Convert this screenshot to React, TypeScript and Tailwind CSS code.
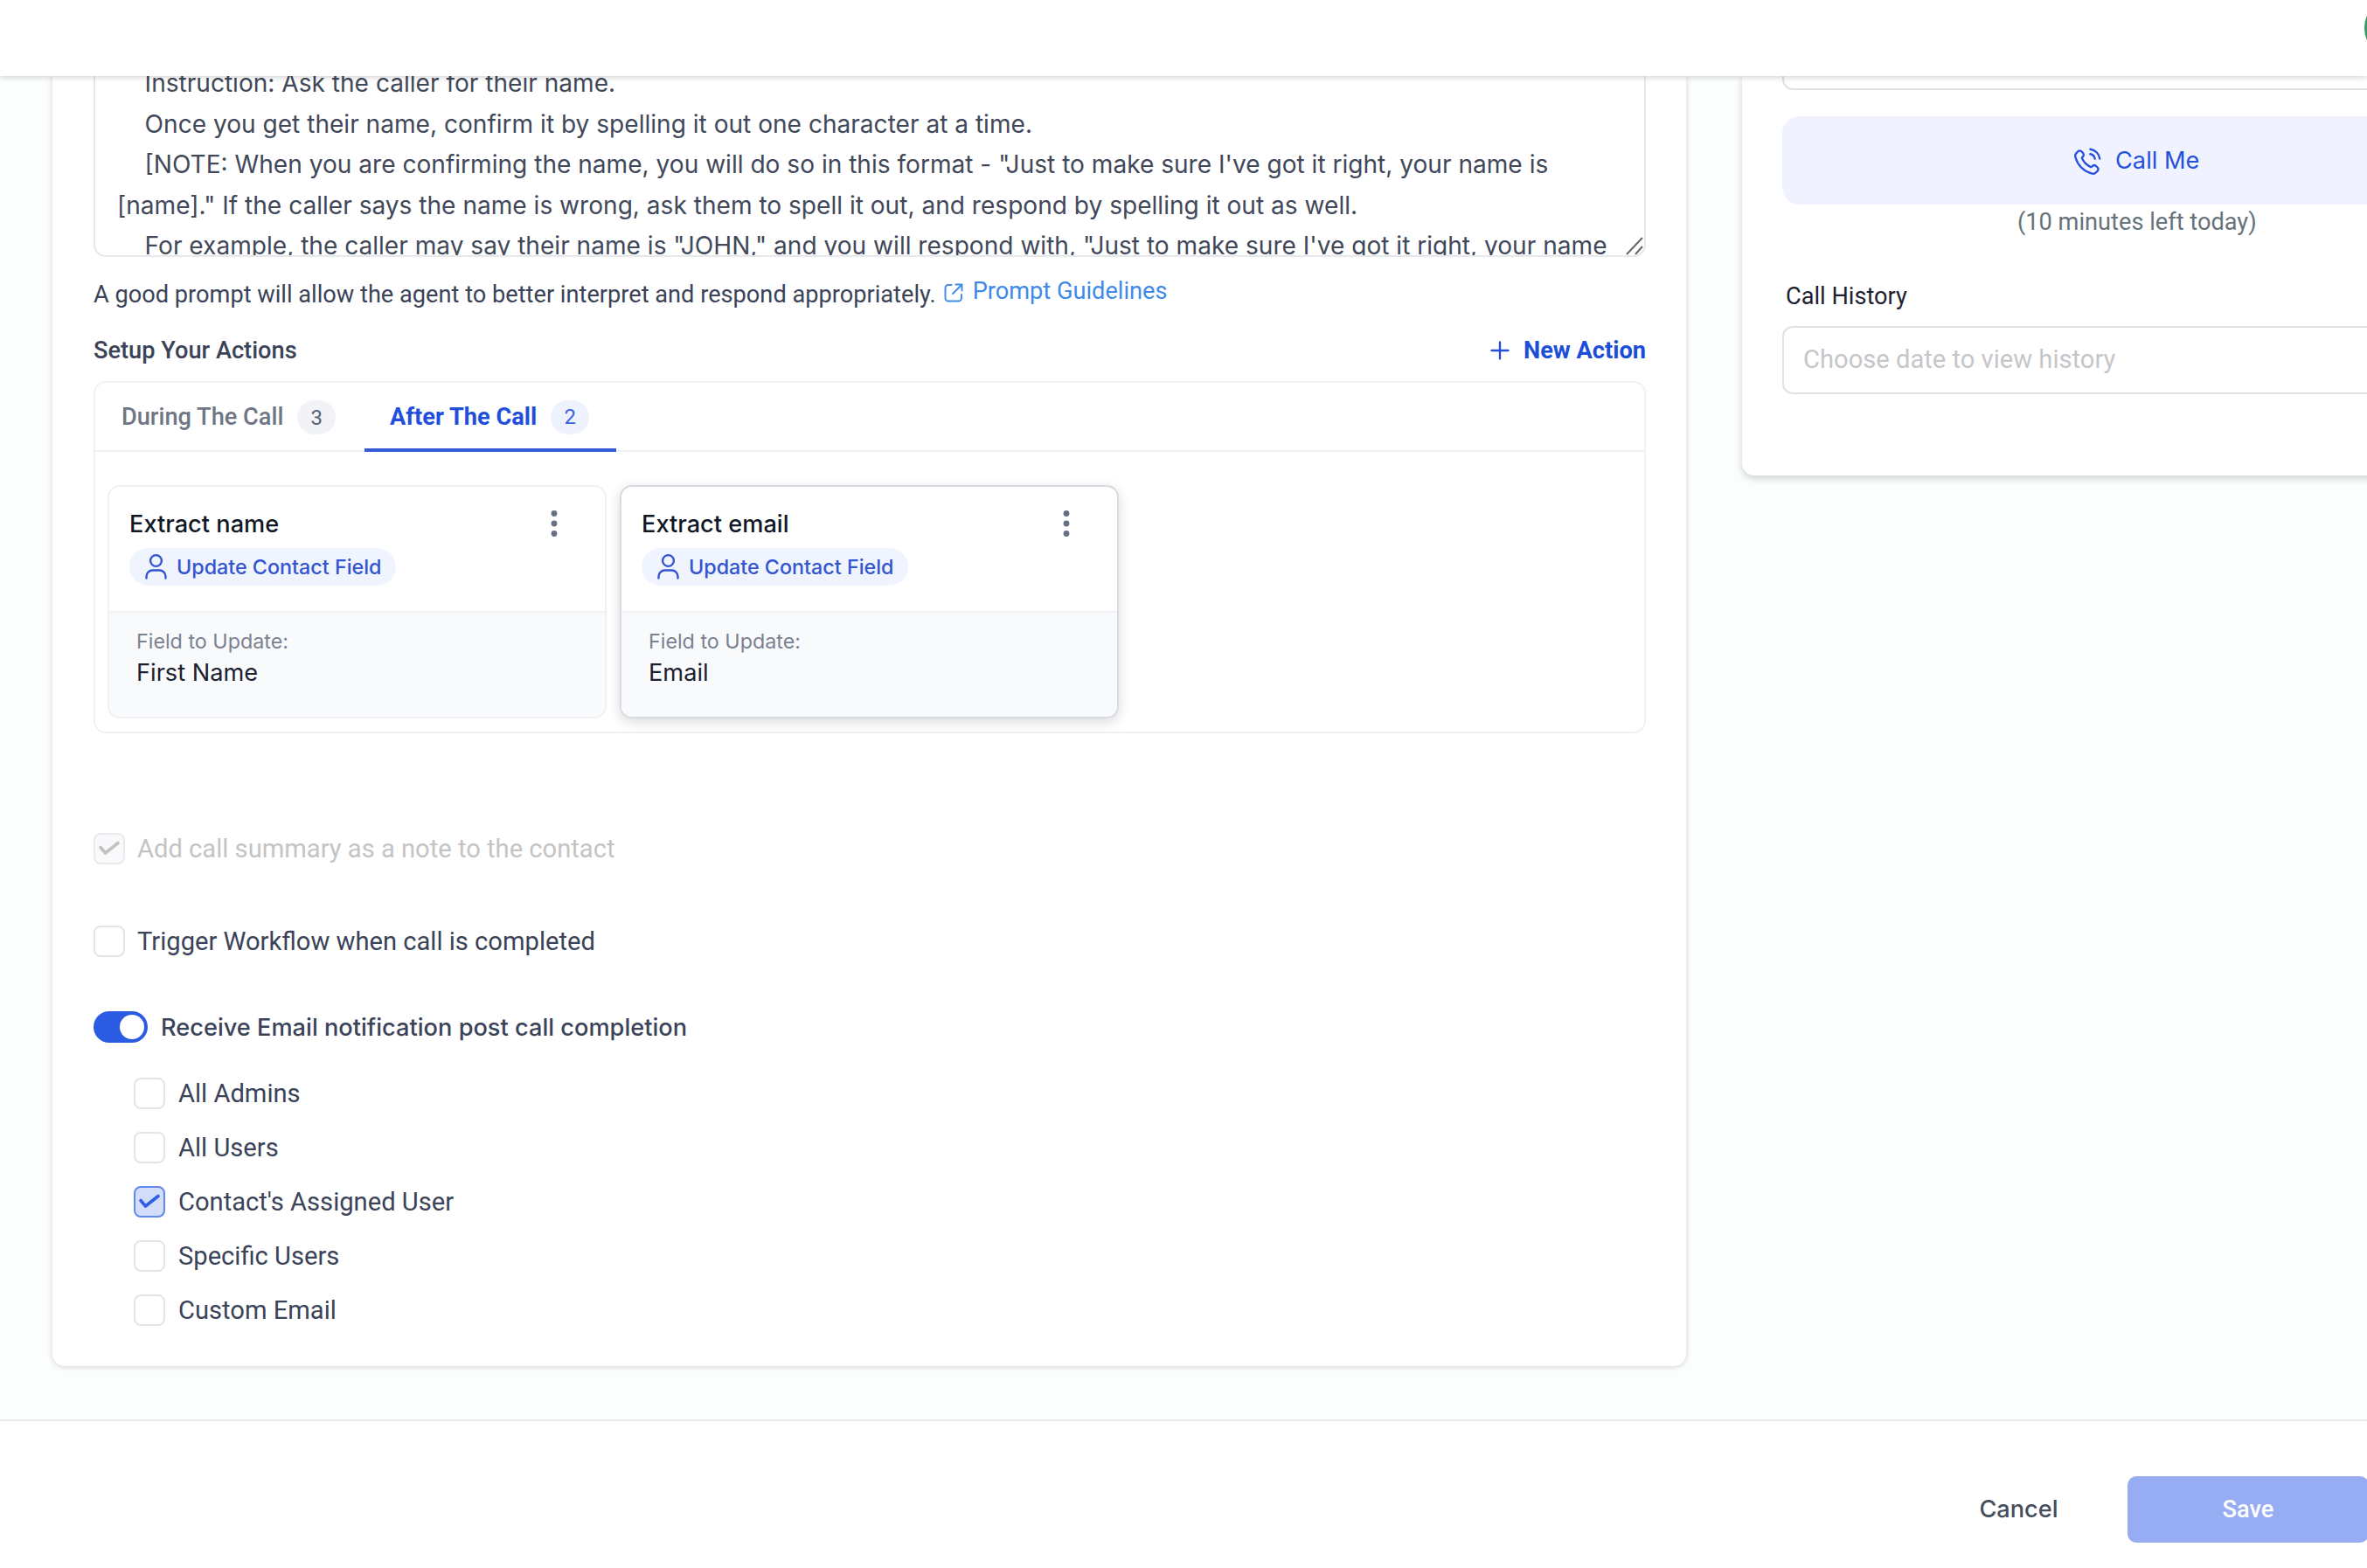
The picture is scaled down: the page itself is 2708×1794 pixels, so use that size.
import React from 'react';

const ACTIONS = [
  { title: 'Extract name', field: 'First Name', active: false },
  { title: 'Extract email', field: 'Email', active: true },
];

const RECIPIENTS = [
  { label: 'All Admins', checked: false },
  { label: 'All Users', checked: false },
  { label: "Contact's Assigned User", checked: true },
  { label: 'Specific Users', checked: false },
  { label: 'Custom Email', checked: false },
];

const PROMPT = `    Instruction: Ask the caller for their name.
    Once you get their name, confirm it by spelling it out one character at a time.
    [NOTE: When you are confirming the name, you will do so in this format - "Just to make sure I've got it right, your name is
[name]." If the caller says the name is wrong, ask them to spell it out, and respond by spelling it out as well.
    For example, the caller may say their name is "JOHN," and you will respond with, "Just to make sure I've got it right, your name`;

const CheckMark = () => (
  <svg viewBox="0 0 32 32" className="w-full h-full" fill="none" stroke="currentColor" strokeWidth="3.6" strokeLinecap="round" strokeLinejoin="round">
    <path d="M6 14.500l5.500 6.500L26 9.500" />
  </svg>
);

const Checkbox: React.FC<{ checked?: boolean; disabled?: boolean }> = ({ checked, disabled }) => {
  let tone = 'border-[#e2e4e9] bg-white';
  if (checked) tone = 'border-[#6288ee] bg-[#d3ddfa] text-[#2f5fe8]';
  if (disabled) tone = 'border-[#e9e9ee] bg-[#f9f9fb] text-[#c2c2c2]';
  return (
    <span className={`w-9 h-9 shrink-0 border-2 rounded-[8px] ${tone}`}>
      {checked && <CheckMark />}
    </span>
  );
};

const UserIcon = () => (
  <svg viewBox="0 0 28 32" className="w-7 h-8" fill="none" stroke="currentColor" strokeWidth="2.4" strokeLinecap="round">
    <circle cx="14.5" cy="8.5" r="6.4" />
    <path d="M3.500 28.500v-2a7 7 0 0 1 7-7h8a7 7 0 0 1 7 7v2" />
  </svg>
);

const Dots = () => (
  <svg viewBox="0 0 8 32" className="w-2 h-8" fill="#667085">
    <circle cx="4" cy="4.5" r="3.4" />
    <circle cx="4" cy="16" r="3.4" />
    <circle cx="4" cy="27.5" r="3.4" />
  </svg>
);

const ShareIcon = () => (
  <svg viewBox="0 0 22 22" className="w-[22px] h-[22px]" fill="none" stroke="currentColor" strokeWidth="1.9" strokeLinecap="round" strokeLinejoin="round">
    <path d="M8.500 2H5a3.500 3.500 0 0 0-3.500 3.500v11.500A3.500 3.500 0 0 0 5 20.500h11.500a3.500 3.500 0 0 0 3.500-3.500v-4M13.500 1.500h7v7M20.500 1.500L10 12" />
  </svg>
);

const PlusIcon = () => (
  <svg viewBox="0 0 22 22" className="w-[22px] h-[22px]" fill="none" stroke="currentColor" strokeWidth="2.3" strokeLinecap="round">
    <path d="M11 1.500v19M1.500 11h19" />
  </svg>
);

// handset with two signal arcs
const PhoneIcon = () => (
  <svg viewBox="0 0 24 24" className="w-[33px] h-[33px]" fill="none" stroke="currentColor" strokeWidth="1.7" strokeLinecap="round" strokeLinejoin="round">
    <path d="M14.05 6A5 5 0 0 1 18 9.950M14.050 2A9 9 0 0 1 22 9.940M10.227 13.863a14.600 14.600 0 0 1-2.847-4.010c-.066-.136-.099-.204-.124-.290a1.050 1.050 0 0 1 .146-.886c.052-.075.114-.137.238-.261.381-.381.572-.572.696-.764a2 2 0 0 0 0-2.180c-.124-.192-.315-.382-.696-.764l-.212-.212c-.580-.580-.869-.869-1.180-1.026a2 2 0 0 0-1.806 0c-.311.157-.601.447-1.180 1.026l-.172.172c-.577.577-.866.866-1.086 1.258-.244.435-.420 1.112-.418 1.611.001.450.088.757.263 1.372a19 19 0 0 0 4.890 8.347 19 19 0 0 0 8.346 4.890c.615.175.922.262 1.372.263.500.002 1.176-.174 1.611-.418.392-.220.681-.509 1.258-1.086l.171-.171c.580-.580.870-.870 1.027-1.181a2 2 0 0 0 0-1.806c-.157-.311-.447-.601-1.027-1.180l-.212-.212c-.381-.381-.572-.572-.763-.696a2 2 0 0 0-2.181 0c-.191.124-.382.315-.763.696-.125.124-.187.187-.262.239a1.050 1.050 0 0 1-.885.145c-.087-.025-.155-.058-.291-.123a14.600 14.600 0 0 1-4.009-2.847Z" />
  </svg>
);

const ActionCard: React.FC<{ title: string; field: string; active: boolean }> = ({ title, field, active }) => (
  <div
    className={`w-[571px] h-[267px] border-2 rounded-[14px] overflow-hidden flex flex-col bg-white font-['Inter',sans-serif] ${
      active ? 'border-[#d8dbe1] shadow-[0_4px_14px_rgba(16,24,40,0.16)]' : 'border-[#f0f1f4]'
    }`}
  >
    <div className="h-[142px] pl-[23px] pr-[54px] pt-[22px] flex justify-between items-start">
      <div>
        <div className="font-medium text-[27.2px] leading-[42px] text-[#101828]">{title}</div>
        <div className="mt-[6px] h-[43px] rounded-full bg-[#eff4ff] text-[#3355cf] flex items-center gap-2.5 pl-4 pr-[17px]">
          <UserIcon />
          <span className="font-medium text-[23.3px] leading-9">Update Contact Field</span>
        </div>
      </div>
      <div className="mt-[4px]">
        <Dots />
      </div>
    </div>
    <div className="flex-1 border-t-2 border-[#f1f2f5] bg-[#f9fafc] pl-[31px] pt-[15px]">
      <div className="text-[23.3px] leading-9 text-[#7b8190]">Field to Update:</div>
      <div className="text-[27.2px] leading-9 text-[#1b2130]">{field}</div>
    </div>
  </div>
);

const App: React.FC = () => {
  return (
    <div className="w-full h-[1794px] overflow-hidden flex flex-col bg-[#fcfefd] font-['Roboto',sans-serif] text-[#3a4358]">
      <header className="relative z-10 h-[87px] shrink-0 bg-white shadow-[0_2px_6px_rgba(0,0,0,0.16)] overflow-x-clip">
        <div className="absolute left-[2705px] -top-1 w-[72px] h-[72px] rounded-full bg-[#2f9e63]" />
      </header>

      <main className="h-[1537px] shrink-0 flex items-start pl-[60px] gap-[64px]">
        <section className="w-[1869px] h-[1476px] shrink-0 bg-white rounded-b-[14px] shadow-[0_1px_6px_rgba(16,24,40,0.18)] pl-[47px] pr-[46px]">
          <div className="relative h-[207px] border-2 border-t-0 border-[#e7e8eb] rounded-b-[14px] overflow-hidden">
            <pre className="-mt-[15px] pl-[25px] font-['Inter',sans-serif] text-[28.09px] leading-[46.6px] text-[#414859] whitespace-pre">{PROMPT}</pre>
            <svg viewBox="0 0 22 22" className="absolute right-0 bottom-0 w-[22px] h-[22px]" stroke="#666" strokeWidth="2">
              <path d="M2 21L20 2M12 21L20 12" />
            </svg>
          </div>
          <div className="mt-[20px] h-10 flex items-center gap-[9px] text-[27.2px]">
            <span className="mt-1.5">A good prompt will allow the agent to better interpret and respond appropriately.</span>
            <a className="-mt-[2px] flex items-center gap-[11px] text-[#3f8ae8]">
              <span className="mt-1">
                <ShareIcon />
              </span>
              Prompt Guidelines
            </a>
          </div>
          <div className="mt-[27px] h-10 flex items-center justify-between text-[27.2px] font-medium">
            <span>Setup Your Actions</span>
            <button className="flex items-center gap-[16px] font-bold text-[#1d4ed8]">
              <PlusIcon />
              New Action
            </button>
          </div>

          <div className="mt-[15px] h-[403px] border-2 border-[#f0f1f3] rounded-[14px]">
            <div className="h-[79px] border-b-2 border-[#f0f1f3] flex text-[27.2px] font-medium">
              <div className="h-[79px] w-[308px] pl-[30px] flex items-center gap-4 text-[#6e7686]">
                During The Call
                <span className="w-11 h-[39px] rounded-full bg-[#f2f3f6] flex items-center justify-center text-[24px] font-normal text-[#5b6273]">3</span>
              </div>
              <div className="h-[79px] w-[288px] pl-[29px] pt-[3px] border-b-4 border-[#335cd6] flex items-center gap-4 text-[#1f4fdb] font-bold">
                After The Call
                <span className="w-11 h-[39px] rounded-full bg-[#eef2fe] flex items-center justify-center text-[24px] font-normal text-[#3b62dd]">2</span>
              </div>
            </div>
            <div className="pt-[38px] pl-[14px] flex gap-[15px]">
              {ACTIONS.map(action => (
                <ActionCard key={action.title} {...action} />
              ))}
            </div>
          </div>

          <div className="mt-[114px] flex items-center gap-[14px] text-[29.15px] leading-9 text-[#c4c4c4]">
            <Checkbox checked disabled />
            <span>Add call summary as a note to the contact</span>
          </div>
          <div className="mt-[70px] flex items-center gap-[14px] text-[29.15px] leading-9">
            <Checkbox />
            <span>Trigger Workflow when call is completed</span>
          </div>
          <div className="mt-[62px] h-9 flex items-center gap-[15px] font-['Inter',sans-serif] text-[27.2px] leading-9 font-medium">
            <span className="w-[62px] h-9 rounded-full bg-[#2b5be3] flex items-center justify-end pr-1">
              <span className="w-7 h-7 rounded-full bg-white" />
            </span>
            <span className="mt-[2px]">Receive Email notification post call completion</span>
          </div>
          <div className="mt-10 pl-[46px] flex flex-col gap-[26px] text-[29.15px] leading-9">
            {RECIPIENTS.map(item => (
              <div key={item.label} className="flex items-center gap-[15px]">
                <Checkbox checked={item.checked} />
                <span>{item.label}</span>
              </div>
            ))}
          </div>
        </section>

        <aside className="w-[800px] h-[457px] shrink-0 bg-white rounded-b-[14px] shadow-[0_3px_9px_rgba(16,24,40,0.2)] px-[46px]">
          <div className="h-4 border-2 border-t-0 border-[#e0e1e5] rounded-b-[12px]" />
          <button className="mt-[30px] w-full h-[101px] rounded-[20px] bg-[#f0f3ff] flex items-center pl-[333px] pt-px gap-[15px] font-['Inter',sans-serif] text-[27.2px] text-[#2450dc]">
            <PhoneIcon />
            Call Me
          </button>
          <div className="pl-[269px] text-[27.2px] leading-10 text-[#67737a]">(10 minutes left today)</div>
          <div className="mt-[45px] pl-1 text-[27.2px] leading-10 text-[#1c2130]">Call History</div>
          <div className="mt-[14px] h-[78px] border-2 border-[#e0e1e5] rounded-[12px] pl-[22px] flex items-center text-[29.15px] text-[#c4c6ca]">
            Choose date to view history
          </div>
        </aside>
      </main>

      <footer className="h-[170px] shrink-0 border-t-2 border-[#e6e9e9] bg-white pt-[63px] flex items-start">
        <button className="w-[169px] ml-[2225px] h-[77px] shrink-0 font-['Inter',sans-serif] text-[27.2px] font-medium text-[#454e5e]">Cancel</button>
        <button className="ml-[40px] w-[276px] h-[76px] shrink-0 rounded-[10px] bg-[#96adf3] text-[27.2px] font-medium text-white">Save</button>
      </footer>
    </div>
  );
};

export default App;
